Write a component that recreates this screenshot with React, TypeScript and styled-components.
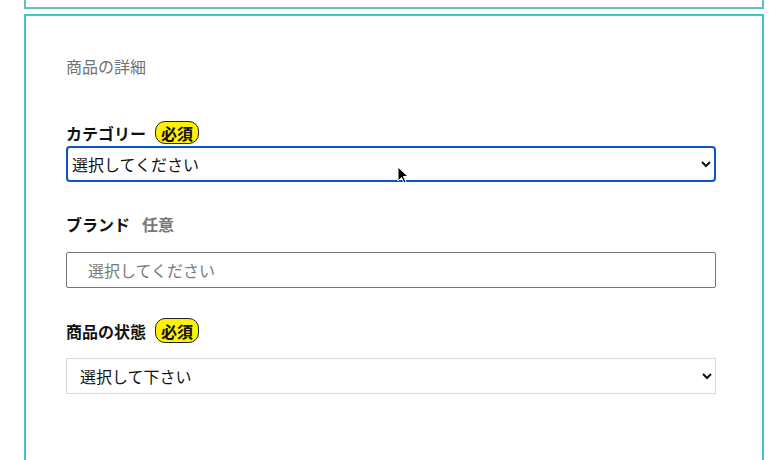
import React from "react";
import styled, { createGlobalStyle } from "styled-components";

const Global = createGlobalStyle`
  html, body { margin: 0; padding: 0; background: #fff; }
  body { font-family: "Noto Sans CJK JP", "Noto Sans", sans-serif; color: #111; }
  * { box-sizing: border-box; }
`;

const Page = styled.div`
  position: relative;
  width: 776px;
  height: 460px;
  overflow: hidden;
  padding-left: 24px;
`;

const TopCard = styled.div`
  width: 740px;
  height: 9px;
  border: 2px solid #5fbfbf;
  border-top: none;
  margin-bottom: 5px;
`;

const Card = styled.section`
  width: 740px;
  height: 460px;
  border: 2px solid #38c6cc;
  border-bottom: none;
  padding: 39px 46px 0 40px;
  display: flex;
  flex-direction: column;
`;

const Title = styled.h2`
  margin: 0;
  font-size: 16px;
  line-height: 22px;
  font-weight: 400;
  color: #727272;
`;

const Field = styled.div<{ $top: number; $gap: number }>`
  margin-top: ${(p) => p.$top}px;
  display: flex;
  flex-direction: column;
  gap: ${(p) => p.$gap}px;
`;

const LabelRow = styled.label`
  display: flex;
  align-items: center;
  gap: 10px;
  font-size: 16px;
  line-height: 22px;
  font-weight: 700;
  color: #111;
`;

const Badge = styled.span<{ $h: number }>`
  display: inline-flex;
  align-items: center;
  justify-content: center;
  height: ${(p) => p.$h}px;
  padding: 0 5px;
  margin-left: -1px;
  background: #fff200;
  border: 1px solid #222;
  border-radius: 10px;
  font-size: 16px;
  font-weight: 700;
  color: #111;
`;

const Optional = styled.span`
  font-size: 16px;
  font-weight: 700;
  color: #777;
  margin-left: 2px;
`;

const Select = styled.select<{ $variant: "focus" | "plain" }>`
  width: 650px;
  height: 36px;
  font-family: "Noto Sans CJK JP", "Noto Sans", sans-serif;
  font-size: 16px;
  color: #111;
  background: #fff;
  outline: none;
  ${(p) =>
    p.$variant === "focus"
      ? `border: 2px solid #0a53c2; border-radius: 4px; padding: 0 0 1px 0;`
      : `border: 1px solid #d9d9d9; border-radius: 0; padding: 0 0 1px 9px;`}
`;

const Input = styled.input`
  width: 650px;
  height: 36px;
  border: 1px solid #767676;
  border-radius: 2px;
  padding: 0 0 1px 21px;
  font-family: "Noto Sans CJK JP", "Noto Sans", sans-serif;
  font-size: 16px;
  outline: none;
  &::placeholder { color: #7a7a7a; }
`;

const Cursor = styled.svg`
  position: absolute;
  left: 397px;
  top: 166px;
  pointer-events: none;
`;

export default function App() {
  return (
    <Page>
      <Global />
      <TopCard />
      <Card>
        <Title>商品の詳細</Title>
        <Field $top={44} $gap={2}>
          <LabelRow>
            カテゴリー <Badge $h={23}>必須</Badge>
          </LabelRow>
          <Select $variant="focus" defaultValue="">
            <option value="">選択してください</option>
          </Select>
        </Field>
        <Field $top={31} $gap={17}>
          <LabelRow>
            ブランド <Optional>任意</Optional>
          </LabelRow>
          <Input placeholder="選択してください" />
        </Field>
        <Field $top={30} $gap={15}>
          <LabelRow>
            商品の状態 <Badge $h={25}>必須</Badge>
          </LabelRow>
          <Select $variant="plain" defaultValue="">
            <option value="">選択して下さい</option>
          </Select>
        </Field>
      </Card>
      <Cursor width="12" height="19" viewBox="0 0 12 19">
        <path d="M1 1 L1 15 L4.5 11.5 L7 17 L9 16 L6.5 10.5 L11 10.5 Z" fill="#000" stroke="#fff" strokeWidth="1" />
      </Cursor>
    </Page>
  );
}
